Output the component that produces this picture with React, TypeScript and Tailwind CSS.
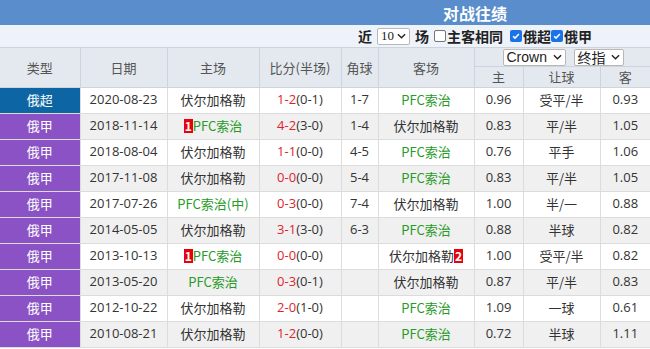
import React from "react";

type Row = {
  league: string;
  date: string;
  home: string;
  homeGreen: boolean;
  homeBadge?: string;
  score: string;
  half: string;
  corner: string;
  away: string;
  awayGreen: boolean;
  awayBadge?: string;
  h: string;
  line: string;
  g: string;
};

const rows: Row[] = [
  { league: "俄超", date: "2020-08-23", home: "伏尔加格勒", homeGreen: false, score: "1-2", half: "(0-1)", corner: "1-7", away: "PFC索治", awayGreen: true, h: "0.96", line: "受平/半", g: "0.93" },
  { league: "俄甲", date: "2018-11-14", home: "PFC索治", homeGreen: true, homeBadge: "1", score: "4-2", half: "(3-0)", corner: "1-4", away: "伏尔加格勒", awayGreen: false, h: "0.83", line: "平/半", g: "1.05" },
  { league: "俄甲", date: "2018-08-04", home: "伏尔加格勒", homeGreen: false, score: "1-1", half: "(0-0)", corner: "4-5", away: "PFC索治", awayGreen: true, h: "0.76", line: "平手", g: "1.06" },
  { league: "俄甲", date: "2017-11-08", home: "伏尔加格勒", homeGreen: false, score: "0-0", half: "(0-0)", corner: "5-4", away: "PFC索治", awayGreen: true, h: "0.83", line: "平/半", g: "1.05" },
  { league: "俄甲", date: "2017-07-26", home: "PFC索治(中)", homeGreen: true, score: "0-3", half: "(0-0)", corner: "7-4", away: "伏尔加格勒", awayGreen: false, h: "1.00", line: "半/一", g: "0.88" },
  { league: "俄甲", date: "2014-05-05", home: "伏尔加格勒", homeGreen: false, score: "3-1", half: "(3-0)", corner: "6-3", away: "PFC索治", awayGreen: true, h: "0.88", line: "半球", g: "0.82" },
  { league: "俄甲", date: "2013-10-13", home: "PFC索治", homeGreen: true, homeBadge: "1", score: "0-0", half: "(0-0)", corner: "", away: "伏尔加格勒", awayGreen: false, awayBadge: "2", h: "1.00", line: "受平/半", g: "0.82" },
  { league: "俄甲", date: "2013-05-20", home: "PFC索治", homeGreen: true, score: "0-3", half: "(0-1)", corner: "", away: "伏尔加格勒", awayGreen: false, h: "0.87", line: "平/半", g: "0.83" },
  { league: "俄甲", date: "2012-10-22", home: "伏尔加格勒", homeGreen: false, score: "2-0", half: "(1-0)", corner: "", away: "PFC索治", awayGreen: true, h: "1.09", line: "一球", g: "0.61" },
  { league: "俄甲", date: "2010-08-21", home: "伏尔加格勒", homeGreen: false, score: "1-2", half: "(0-0)", corner: "", away: "PFC索治", awayGreen: true, h: "0.72", line: "半球", g: "1.11" },
];

function Badge({ n }: { n: string }) {
  return (
    <span className="inline-block bg-[#e8000b] text-white font-bold text-[12px] leading-[14px] px-[1px]">{n}</span>
  );
}

function Check({ checked }: { checked: boolean }) {
  return checked ? (
    <span className="inline-flex w-[12px] h-[12px] rounded-[2px] bg-[#1a73e8] items-center justify-center">
      <svg viewBox="0 0 12 12" className="w-[10px] h-[10px]">
        <path d="M2.5 6.2l2.3 2.3 4.7-5" fill="none" stroke="white" strokeWidth={1.8} />
      </svg>
    </span>
  ) : (
    <span className="inline-block w-[12px] h-[12px] rounded-[2px] border border-[#767676] bg-white" />
  );
}

function Select({ label, w }: { label: string; w: string }) {
  return (
    <span className={`inline-flex items-center justify-between h-[17px] bg-white border border-[#b8b8b8] rounded-[2px] px-[3px] text-[14px] text-[#222] ${w}`}>
      <span>{label}</span>
      <svg viewBox="0 0 10 6" className="w-[9px] h-[6px]">
        <path d="M1 1l4 4 4-4" fill="none" stroke="#222" strokeWidth={1.5} />
      </svg>
    </span>
  );
}

export default function App() {
  const th = "border border-[#cdd4dd] font-normal text-[#555]";
  const td = "border border-[#dcdcdc] h-[26px] p-0 text-center";
  return (
    <div className="w-[650px] h-[349px] overflow-hidden bg-white font-['Open_Sans','Noto_Sans_CJK_SC',sans-serif] text-[13px] text-[#333]">
      <div className="h-[25px] bg-[#5a8dcb] flex items-center">
        <div className="w-[950px] shrink-0 text-center text-white font-bold text-[16px] font-['Noto_Sans_CJK_SC',sans-serif]">对战往绩</div>
      </div>
      <div className="h-[22px] bg-[#eef3f9] flex">
        <div className="w-[950px] shrink-0 h-full flex items-center justify-center gap-[5px] font-bold text-[14px] text-[#222] font-['Noto_Sans_CJK_SC',sans-serif]">
          <span>近</span>
          <span className="inline-flex items-center justify-between w-[33px] h-[17px] bg-white border border-[#b8b8b8] rounded-[2px] px-[3px] font-normal text-[13px] font-['Liberation_Serif',serif]">
            10
            <svg viewBox="0 0 10 6" className="w-[9px] h-[6px]">
              <path d="M1 1l4 4 4-4" fill="none" stroke="#222" strokeWidth={1.5} />
            </svg>
          </span>
          <span>场</span>
          <span className="inline-flex items-center gap-[1px]"><Check checked={false} />主客相同</span>
          <span className="inline-flex items-center gap-[1px] ml-[2px]"><Check checked={true} />俄超</span>
          <span className="inline-flex items-center gap-[1px] -ml-[5px]"><Check checked={true} />俄甲</span>
        </div>
      </div>
      <table className="border-collapse table-fixed w-[650px] font-['Noto_Sans_CJK_SC',sans-serif]">
        <colgroup>
          <col className="w-[80px]" />
          <col className="w-[87px]" />
          <col className="w-[92px]" />
          <col className="w-[82px]" />
          <col className="w-[37px]" />
          <col className="w-[96px]" />
          <col className="w-[49px]" />
          <col className="w-[77px]" />
          <col className="w-[50px]" />
        </colgroup>
        <thead className="bg-[#e4e9ef]">
          <tr className="h-[19px]">
            <th rowSpan={2} className={th + " border-l-0"}>类型</th>
            <th rowSpan={2} className={th}>日期</th>
            <th rowSpan={2} className={th}>主场</th>
            <th rowSpan={2} className={th}>比分(半场)</th>
            <th rowSpan={2} className={th}>角球</th>
            <th rowSpan={2} className={th}>客场</th>
            <th colSpan={3} className={th + " border-r-0 p-0"}>
              <div className="flex items-center gap-[8px] pl-[28px] h-[18px]">
                <Select label="Crown" w="w-[63px] font-['Liberation_Sans',sans-serif]" />
                <Select label="终指" w="w-[50px]" />
              </div>
            </th>
          </tr>
          <tr className="h-[19px]">
            <th className={th + " text-[13px]"}>主</th>
            <th className={th + " text-[13px]"}>让球</th>
            <th className={th + " border-r-0 text-[13px]"}>客</th>
          </tr>
        </thead>
        <tbody>
          {rows.map((r, i) => (
            <tr key={i} className={i % 2 === 0 ? "bg-white" : "bg-[#f0f0f0]"}>
              <td className={`${td} border-l-0 text-white ${r.league === "俄超" ? "bg-[#0d66a3]" : "bg-[#8a52c4]"}`}>{r.league}</td>
              <td className={td + " font-['Open_Sans',sans-serif]"}>{r.date}</td>
              <td className={`${td} ${r.homeGreen ? "text-[#279b27]" : ""}`}>
                {r.homeBadge && <Badge n={r.homeBadge} />}
                {r.home}
              </td>
              <td className={td + " font-['Open_Sans',sans-serif]"}>
                <span className="text-[#e0232b]">{r.score}</span>
                {r.half}
              </td>
              <td className={td + " font-['Open_Sans',sans-serif]"}>{r.corner}</td>
              <td className={`${td} ${r.awayGreen ? "text-[#279b27]" : ""}`}>
                {r.away}
                {r.awayBadge && <Badge n={r.awayBadge} />}
              </td>
              <td className={td + " font-['Open_Sans',sans-serif]"}>{r.h}</td>
              <td className={td}>{r.line}</td>
              <td className={td + " border-r-0 font-['Open_Sans',sans-serif]"}>{r.g}</td>
            </tr>
          ))}
        </tbody>
      </table>
    </div>
  );
}
